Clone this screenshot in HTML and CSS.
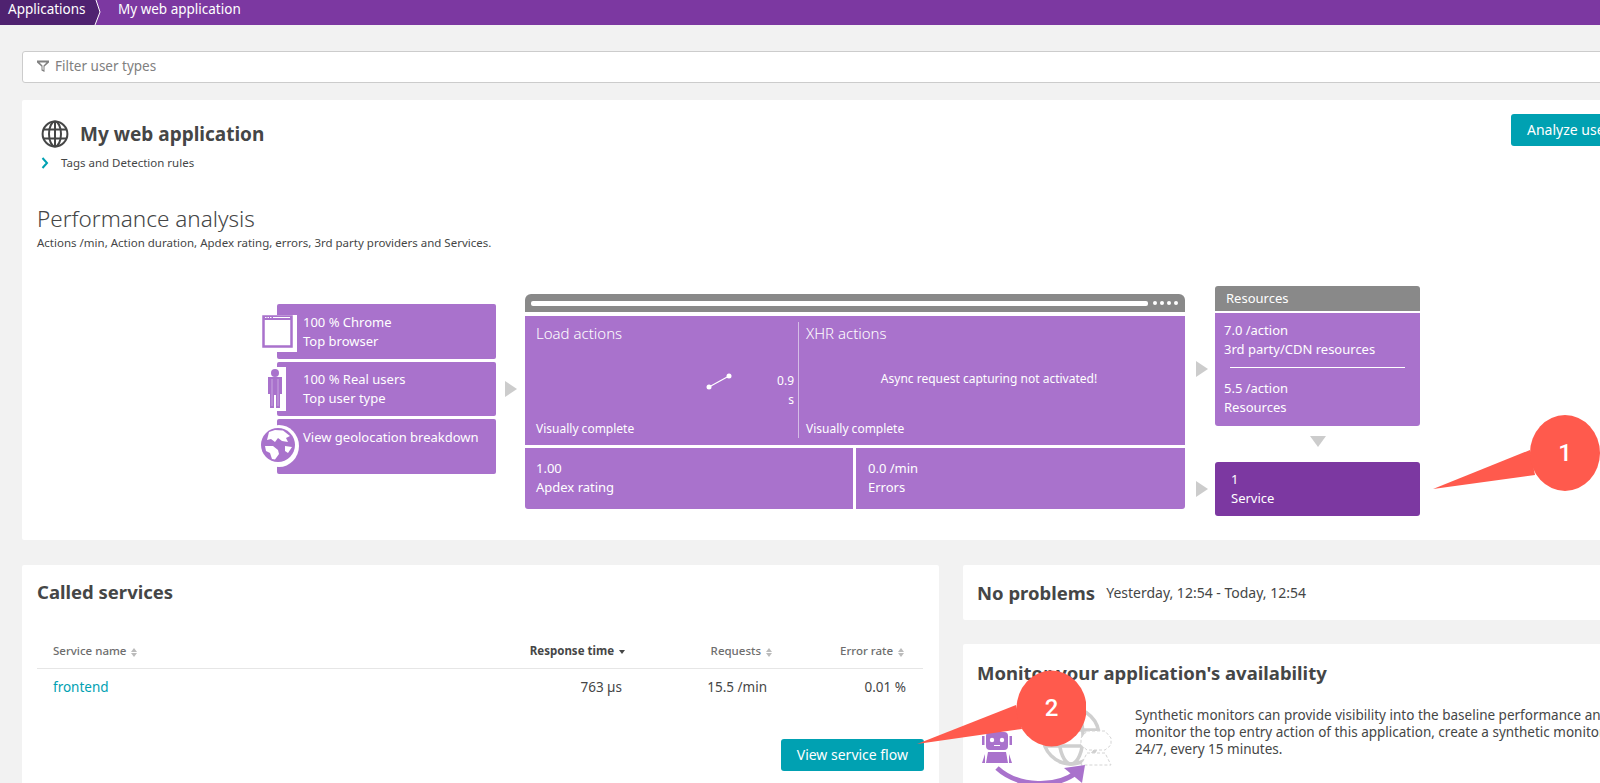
FILE: index.html
```html
<!DOCTYPE html>
<html lang="en">
<head>
    <meta charset="UTF-8">
    <title>My web application</title>
    <link rel="stylesheet" href="styles.css">
</head>
<body>
    <header class="topbar">
        <span class="crumb crumb-dark">Applications</span>
        <svg class="crumb-sep" width="12" height="25" viewBox="0 0 12 25"><path d="M0 0H3L7 12L2 25H0Z" fill="#4f2270"/><path d="M3 0L7 12L2 25" fill="none" stroke="#fff"/></svg>
        <span class="crumb">My web application</span>
    </header>

    <main class="page">
        <div class="filter">
            <svg width="12" height="12" viewBox="0 0 12 12"><path d="M0 0.500H12V2.500L7.500 6.500V12L4.500 10.500V6.500L0 2.500ZM2.500 2.500L5.500 5.500V9.500L6.500 10V5.500L9.500 2.500Z" fill="#808080" fill-rule="evenodd"/></svg>
            <span>Filter user types</span>
        </div>

        <section class="card app-card">
            <div class="app-head">
                <div class="app-title">
                    <svg width="28" height="28" viewBox="0 0 28 28" fill="none" stroke="#454646" stroke-width="2"><circle cx="14" cy="14" r="12.4"/><ellipse cx="14" cy="14" rx="6" ry="12.4"/><path d="M14 1.6V26.4M2.500 9.500H25.500M2.500 18.500H25.500"/></svg>
                    <h1>My web application</h1>
                </div>
                <a class="btn btn-analyze">Analyze users</a>
            </div>
            <div class="tags">
                <svg width="8" height="12" viewBox="0 0 8 12"><path d="M1.500 1L6 6L1.500 11" fill="none" stroke="#00a1b2" stroke-width="2"/></svg>
                <span>Tags and Detection rules</span>
            </div>
            <h2 class="perf-title">Performance analysis</h2>
            <p class="perf-sub">Actions /min, Action duration, Apdex rating, errors, 3rd party providers and Services.</p>

            <div class="flow">
                <div class="flow-left">
                    <div class="tile">
                        <svg class="tile-icon icon-browser" width="35" height="37" viewBox="0 0 35 37"><path d="M0 0H35V37H4V33H0Z" fill="#fff"/><rect x="1.500" y="1.500" width="28" height="30" fill="#fff" stroke="#a972cc" stroke-width="2.500"/><path d="M1 1H30V5H1Z" fill="#a972cc"/><path d="M3 2.500H4.500M5.500 2.500H7M8 2.500H9.500M11 2.500H28" stroke="#fff"/></svg>
                        <p>100 % Chrome<br>Top browser</p>
                    </div>
                    <div class="tile">
                        <svg class="tile-icon icon-person" width="20" height="44" viewBox="0 0 20 44"><path d="M8 0H20V44H8Z" fill="#fff"/><circle cx="9" cy="6" r="4" fill="#a972cc"/><path d="M2 10H16V27H14V41H10V28H8V41H4V27H2Z" fill="#a972cc"/><path d="M6 12V39M12 12V39" stroke="#c9a6e0"/></svg>
                        <p>100 % Real users<br>Top user type</p>
                    </div>
                    <div class="tile">
                        <svg class="tile-icon icon-globe" width="40" height="42" viewBox="0 0 40 42"><ellipse cx="20" cy="21" rx="20" ry="21" fill="#fff"/><circle cx="19" cy="20" r="17" fill="#a972cc"/><path d="M10 7L16 5L24 5.500L31 11L27 13L29 17L23 16L19 13L16 17L12 14L8 15Z M6 21L14 21L19 25L20 29L16 34.500L13 34L11 28L7 26Z M26 21L33 22L29 28L26 26Z" fill="#fff"/></svg>
                        <p>View geolocation breakdown</p>
                    </div>
                </div>
                <span class="arrow-right arrow-left-col"></span>

                <div class="flow-mid">
                    <div class="browser-bar">
                        <span class="url"></span>
                        <span class="dot"></span><span class="dot"></span><span class="dot"></span><span class="dot"></span>
                    </div>
                    <div class="actions">
                        <div class="action-col action-load">
                            <h3>Load actions</h3>
                            <div class="action-mid">
                                <svg width="28" height="18" viewBox="0 0 28 18"><path d="M4 14L24 3" stroke="#fff" stroke-width="1.200"/><circle cx="4" cy="14" r="2.500" fill="#fff"/><circle cx="24" cy="3" r="2.500" fill="#fff"/></svg>
                                <span class="action-value">0.9 s</span>
                            </div>
                            <p>Visually complete</p>
                        </div>
                        <div class="action-col">
                            <h3>XHR actions</h3>
                            <div class="action-mid action-async">Async request capturing not activated!</div>
                            <p>Visually complete</p>
                        </div>
                    </div>
                    <div class="metrics">
                        <p class="metric metric-first">1.00<br>Apdex rating</p>
                        <p class="metric metric-last">0.0 /min<br>Errors</p>
                    </div>
                </div>

                <div class="flow-arrows">
                    <span class="arrow-right"></span>
                    <span class="arrow-right"></span>
                </div>

                <div class="flow-right">
                    <div class="res-head">Resources</div>
                    <div class="res-body">
                        <p>7.0 /action<br>3rd party/CDN resources</p>
                        <hr>
                        <p>5.5 /action<br>Resources</p>
                    </div>
                    <span class="arrow-down"></span>
                    <div class="service-tile">1<br>Service</div>
                </div>
            </div>
        </section>

        <div class="lower">
            <section class="card called">
                <h2 class="card-title">Called services</h2>
                <table class="svc-table">
                    <thead>
                        <tr>
                            <th class="col-name">Service name <i class="sort"></i></th>
                            <th class="col-active">Response time <i class="sort-down"></i></th>
                            <th>Requests <i class="sort"></i></th>
                            <th>Error rate <i class="sort"></i></th>
                        </tr>
                    </thead>
                    <tbody>
                        <tr>
                            <td class="col-name"><a>frontend</a></td>
                            <td>763 µs</td>
                            <td>15.5 /min</td>
                            <td>0.01 %</td>
                        </tr>
                    </tbody>
                </table>
                <div class="called-foot"><a class="btn">View service flow</a></div>
            </section>

            <div class="side">
                <section class="card problems">
                    <h2 class="card-title">No problems</h2>
                    <span>Yesterday, 12:54 - Today, 12:54</span>
                </section>
                <section class="card monitor">
                    <h2 class="card-title">Monitor your application's availability</h2>
                    <div class="monitor-body">
                        <svg class="monitor-art" width="140" height="83" viewBox="0 0 140 83">
                            <g fill="none" stroke="#cfcfcf" stroke-width="3.500">
                                <circle cx="94" cy="36" r="28"/>
                                <ellipse cx="94" cy="36" rx="12" ry="28"/>
                                <path d="M66 30H122M68 46H120"/>
                            </g>
                            <g fill="#fff" stroke="#d4d4d4" stroke-dasharray="3 2">
                                <path d="M110 31H128L134 38V45L128 50H110L104 45V38Z"/>
                                <path d="M110 53H128L134 65H104Z"/>
                            </g>
                            <g fill="#a972cc">
                                <rect x="9" y="32" width="22" height="18" rx="4"/>
                                <rect x="5" y="36" width="2.500" height="9"/>
                                <rect x="32.500" y="36" width="2.500" height="9"/>
                                <path d="M11 52H29L31 63H9Z"/>
                                <path d="M8 54L5 63H8Z"/>
                                <path d="M32 54L35 63H32Z"/>
                            </g>
                            <circle cx="15" cy="40" r="2.200" fill="#fff"/>
                            <circle cx="25" cy="40" r="2.200" fill="#fff"/>
                            <path d="M17 45.500H23" stroke="#fff"/>
                            <path d="M20 68C42 88 80 88 100 72" fill="none" stroke="#a972cc" stroke-width="5"/>
                            <path d="M87 68L108 65L105 83Z" fill="#a972cc"/>
                        </svg>
                        <p>Synthetic monitors can provide visibility into the baseline performance and<br>monitor the top entry action of this application, create a synthetic monitor<br>24/7, every 15 minutes.</p>
                    </div>
                </section>
            </div>
        </div>
    </main>

    <svg class="callout callout-one" width="170" height="80" viewBox="0 0 170 80">
        <path d="M100 35L3 74L105 60Z" fill="#ff5a4d"/>
        <ellipse cx="135" cy="38" rx="35" ry="38" fill="#ff5a4d"/>
        <text x="135" y="46" text-anchor="middle">1</text>
    </svg>
    <svg class="callout callout-two" width="175" height="80" viewBox="0 0 175 80">
        <path d="M105 35L6 74L111 59Z" fill="#ff5a4d"/>
        <ellipse cx="140.500" cy="38.500" rx="35" ry="38" fill="#ff5a4d"/>
        <text x="140.500" y="46" text-anchor="middle">2</text>
    </svg>
</body>
</html>
```

FILE: styles.css
```css
* {
    box-sizing: border-box;
}

html,
body {
    margin: 0;
    height: 783px;
    overflow: hidden;
}

body {
    position: relative;
    background-color: #f2f2f2;
    color: #454646;
    font-family: "Noto Sans", "Open Sans", sans-serif;
    font-size: 13px;
}

p,
h1,
h2,
h3 {
    margin: 0;
}

/* top bar */
.topbar {
    display: flex;
    height: 25px;
    background-color: #7c38a1;
    color: #fff;
    font-size: 13.5px;
    line-height: 18px;
}

.crumb {
    padding-left: 13px;
}

.crumb-dark {
    width: 93px;
    padding-left: 8px;
    background-color: #4f2270;
}

.crumb-sep {
    flex: none;
}

/* page */
.page {
    width: 1720px;
    padding: 26px 0 0 22px;
}

.filter {
    display: flex;
    align-items: center;
    gap: 6px;
    height: 32px;
    margin-bottom: 17px;
    padding: 0 0 2px 14px;
    background-color: #fff;
    border: 1px solid #ccc;
    border-radius: 3px;
    color: #808080;
    font-size: 13.5px;
}

.card {
    background-color: #fff;
    border-radius: 2px;
}

.app-card {
    height: 440px;
    padding: 14px 0 0 15px;
}

.app-head {
    display: flex;
    justify-content: space-between;
    height: 32px;
    padding-left: 4px;
}

.app-title {
    display: flex;
    align-items: center;
    gap: 11px;
    padding-top: 8px;
}

.app-title h1 {
    font-size: 19px;
    font-weight: 700;
}

.btn {
    display: inline-block;
    height: 32px;
    padding: 0 16px;
    background-color: #00a1b2;
    border-radius: 3px;
    color: #fff;
    font-size: 14px;
    line-height: 32px;
    white-space: nowrap;
}

.btn-analyze {
    width: 209px;
}

.tags {
    display: flex;
    align-items: center;
    gap: 12px;
    margin: 8px 0 0 4px;
    font-size: 11.5px;
    line-height: 18px;
}

.perf-title {
    margin-top: 32px;
    font-size: 22.5px;
    font-weight: 300;
    line-height: 30px;
}

.perf-sub {
    font-size: 11.5px;
    line-height: 18px;
}

/* performance diagram */
.flow {
    display: flex;
    margin: 34px 0 0 240px;
    color: #fff;
}

.flow-left {
    display: flex;
    flex-direction: column;
    gap: 3px;
    width: 219px;
    margin-top: 18px;
}

.tile {
    position: relative;
    height: 55px;
    padding: 9px 0 0 26px;
    background-color: #a972cc;
    border-radius: 2px;
    line-height: 19px;
}

.tile:nth-child(2) {
    height: 54px;
    padding-top: 8px;
}

.tile-icon {
    position: absolute;
}

.icon-browser {
    left: -15px;
    top: 11px;
}

.icon-person {
    left: -11px;
    top: 5px;
}

.icon-globe {
    left: -18px;
    top: 6px;
}

.arrow-right {
    display: block;
    width: 0;
    height: 0;
    border-top: 8px solid transparent;
    border-bottom: 8px solid transparent;
    border-left: 12px solid #ccc;
}

.arrow-left-col {
    flex: none;
    margin: 95px 8px 0 9px;
}

.flow-mid {
    width: 660px;
    margin-top: 8px;
}

.browser-bar {
    display: flex;
    align-items: center;
    gap: 3px;
    height: 18px;
    padding: 0 7px 0 6px;
    background-color: #898989;
    border-radius: 6px 6px 0 0;
}

.url {
    flex: 1;
    height: 5px;
    margin-right: 2px;
    background-color: #fff;
    border-radius: 2px;
}

.dot {
    width: 4px;
    height: 4px;
    background-color: #fff;
    border-radius: 50%;
}

.actions {
    display: flex;
    height: 129px;
    margin-top: 4px;
    padding: 6px 0 7px;
    background-color: #a972cc;
}

.action-col {
    display: flex;
    flex-direction: column;
    flex: 1;
    padding: 1px 4px 0 7px;
}

.action-load {
    flex: none;
    width: 274px;
    padding-left: 11px;
    border-right: 1px solid #d5bde6;
}

.action-col h3 {
    font-size: 15px;
    font-weight: 300;
    line-height: 20px;
}

.action-col p {
    font-size: 12px;
    line-height: 18px;
}

.action-mid {
    display: flex;
    flex: 1;
    align-items: center;
    justify-content: flex-end;
    gap: 39px;
}

.action-value {
    width: 22px;
    margin-top: 16px;
    font-size: 12px;
    line-height: 19px;
    text-align: right;
}

.action-async {
    justify-content: center;
    padding: 0 9px 6px 0;
    font-size: 12px;
}

.metrics {
    display: flex;
    gap: 3px;
    margin-top: 3px;
}

.metric {
    flex: 1;
    height: 61px;
    padding: 11px 0 0 12px;
    background-color: #a972cc;
    line-height: 19px;
}

.metric-first {
    flex: none;
    width: 328px;
    padding-left: 11px;
    border-radius: 0 0 0 3px;
}

.metric-last {
    border-radius: 0 0 3px 0;
}

.flow-arrows {
    flex: none;
    width: 30px;
    padding: 75px 0 0 11px;
}

.flow-arrows .arrow-right + .arrow-right {
    margin-top: 104px;
}

.flow-right {
    width: 205px;
}

.res-head {
    height: 25px;
    padding-left: 11px;
    background-color: #898989;
    border-radius: 3px 3px 0 0;
    line-height: 24px;
}

.res-body {
    height: 113px;
    margin-top: 2px;
    padding: 8px 15px 0 9px;
    background-color: #a972cc;
    border-radius: 0 0 3px 3px;
    line-height: 19px;
}

.res-body hr {
    height: 1px;
    margin: 8px 0 11px 6px;
    background-color: #fff;
    border: 0;
}

.arrow-down {
    display: block;
    width: 0;
    height: 0;
    margin: 10px auto 15px;
    border-left: 8px solid transparent;
    border-right: 8px solid transparent;
    border-top: 11px solid #ccc;
}

.service-tile {
    height: 54px;
    padding: 8px 0 0 16px;
    background-color: #7c38a1;
    border-radius: 3px;
    line-height: 19px;
}

/* lower cards */
.lower {
    display: flex;
    gap: 24px;
    margin-top: 25px;
}

.called {
    flex: none;
    width: 917px;
    height: 230px;
    padding: 15px 15px 0;
}

.card-title {
    font-size: 18.5px;
    font-weight: 700;
    line-height: 24px;
}

.svc-table {
    width: 886px;
    margin-top: 30px;
    border-collapse: collapse;
    table-layout: fixed;
    font-size: 13.5px;
}

.svc-table th {
    height: 34px;
    color: #6d6d6d;
    border-bottom: 1px solid #e6e6e6;
    font-size: 11.5px;
    font-weight: 500;
    text-align: right;
}

.svc-table td {
    height: 38px;
    text-align: right;
}

.svc-table a {
    color: #00a1b2;
}

.svc-table .col-name {
    padding-left: 16px;
    text-align: left;
}

.svc-table th:nth-child(2),
.svc-table td:nth-child(2) {
    width: 200px;
}

.svc-table th:nth-child(3),
.svc-table td:nth-child(3) {
    width: 143px;
}

.svc-table th:nth-child(4),
.svc-table td:nth-child(4) {
    width: 150px;
}

.svc-table th:nth-child(2) {
    padding-right: 5px;
}

.svc-table td:nth-child(2) {
    padding-right: 8px;
}

.svc-table th:nth-child(3) {
    padding-right: 1px;
}

.svc-table td:nth-child(3) {
    padding-right: 6px;
}

.svc-table th:nth-child(4) {
    padding-right: 19px;
}

.svc-table td:nth-child(4) {
    padding-right: 17px;
}

.svc-table th.col-active {
    color: #454646;
    font-weight: 700;
}

.sort {
    display: inline-flex;
    flex-direction: column;
    gap: 1px;
    margin-left: 2px;
    vertical-align: middle;
}

.sort::before,
.sort::after {
    content: "";
    border-left: 3.5px solid transparent;
    border-right: 3.5px solid transparent;
}

.sort::before {
    border-bottom: 4px solid #bbb;
}

.sort::after {
    border-top: 4px solid #bbb;
}

.sort-down {
    display: inline-block;
    margin-left: 2px;
    vertical-align: middle;
    border-left: 3px solid transparent;
    border-right: 3px solid transparent;
    border-top: 4px solid #454646;
}

.called-foot {
    display: flex;
    justify-content: flex-end;
    margin-top: 33px;
}

.side {
    flex: 1;
}

.problems {
    display: flex;
    align-items: center;
    gap: 11px;
    height: 55px;
    padding-left: 14px;
    font-size: 14px;
}

.monitor {
    height: 150px;
    margin-top: 24px;
    padding: 17px 0 0 14px;
}

.monitor-body {
    display: flex;
    gap: 18px;
    margin-top: 15px;
}

.monitor-art {
    flex: none;
}

.monitor-body p {
    margin-top: 7px;
    font-size: 13.5px;
    line-height: 17px;
    white-space: nowrap;
}

/* numbered callouts over the shot */
.callout {
    position: absolute;
}

.callout text {
    fill: #fff;
    font-family: "Roboto", "Liberation Sans", sans-serif;
    font-size: 24px;
    font-weight: 500;
}

.callout-one {
    left: 1430px;
    top: 415px;
}

.callout-two {
    left: 911px;
    top: 670px;
}
```
